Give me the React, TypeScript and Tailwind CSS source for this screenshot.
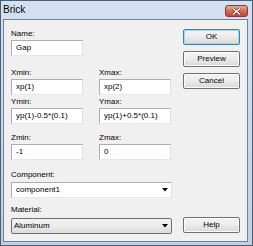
import React from "react";

function Field({ label, value, className = "" }: { label: string; value: string; className?: string }) {
  return (
    <div className={"flex flex-col " + className}>
      <span className="h-[10px] leading-[10px] text-[8px] text-black">{label}</span>
      <div className="mt-[1px] h-[16px] w-[72px] border border-[#abadb3] border-b-[#e3e9ef] border-r-[#dbdfe6] bg-white pl-[4px] text-[8px] leading-[14px] text-black">
        {value}
      </div>
    </div>
  );
}

function Button({ label, primary = false }: { label: string; primary?: boolean }) {
  return (
    <div
      className={
        "flex h-[16px] w-[57px] items-center justify-center rounded-[2px] border bg-gradient-to-b from-[#f4f4f4] via-[#ebebeb] to-[#d8d8d8] text-[8px] text-black " +
        (primary ? "border-[#3c7fb1] shadow-[inset_0_0_0_1px_#a8d8f0]" : "border-[#707070] shadow-[inset_0_0_0_1px_#fcfcfc]")
      }
    >
      {label}
    </div>
  );
}

function Arrow() {
  return (
    <svg width="6" height="4" viewBox="0 0 6 4" className="mr-[3px]">
      <path d="M0 0 H6 L3 3.5 Z" fill="#000" />
    </svg>
  );
}

export default function App() {
  return (
    <div
      className="flex h-[246px] w-[253px] flex-col border border-[#4e5d70] bg-gradient-to-b from-[#d3e1f2] to-[#bfd0e6]"
      style={{ fontFamily: '"Liberation Sans", Arial, sans-serif' }}
    >
      {/* Title bar */}
      <div className="relative h-[18px] shrink-0">
        <span className="absolute left-[2px] top-[3px] text-[10px] leading-[12px] text-black">Brick</span>
        <div className="absolute right-[4px] top-[4px] flex h-[12px] w-[23px] items-center justify-center rounded-[3px] border border-[#8a3a30] bg-gradient-to-b from-[#e9a99b] via-[#d16b57] to-[#c04a36]">
          <svg width="9" height="7" viewBox="0 0 9 7">
            <path d="M1 0.5 L8 6.5 M8 0.5 L1 6.5" stroke="#5a1a12" strokeWidth="2.6" />
            <path d="M1 0.5 L8 6.5 M8 0.5 L1 6.5" stroke="#fff" strokeWidth="1.5" />
          </svg>
        </div>
      </div>

      {/* Client area */}
      <div className="mb-[3px] ml-[2px] mr-[4px] flex flex-1 border border-[#6f8196] bg-[#f0f0f0] pl-[7px] pt-[9px]">
        <div className="flex w-[161px] flex-col">
          <Field label="Name:" value="Gap" />
          <div className="mt-[12px] flex gap-[16px]">
            <Field label="Xmin:" value="xp(1)" />
            <Field label="Xmax:" value="xp(2)" />
          </div>
          <div className="mt-[2px] flex gap-[16px]">
            <Field label="Ymin:" value="yp(1)-0.5*(0.1)" />
            <Field label="Ymax:" value="yp(1)+0.5*(0.1)" />
          </div>
          <div className="mt-[9px] flex gap-[16px]">
            <Field label="Zmin:" value="-1" />
            <Field label="Zmax:" value="0" />
          </div>
          <div className="mt-[10px] flex flex-col">
            <span className="h-[10px] leading-[10px] text-[8px] text-black">Component:</span>
            <div className="mt-[2px] flex h-[16px] w-[161px] items-center justify-between border border-[#abadb3] border-b-[#e3e9ef] border-r-[#dbdfe6] bg-white pl-[4px] text-[8px] text-black">
              <span>component1</span>
              <Arrow />
            </div>
          </div>
          <div className="mt-[7px] flex flex-col">
            <span className="h-[10px] leading-[10px] text-[8px] text-black">Material:</span>
            <div className="mt-[3px] flex h-[16px] w-[161px] items-center justify-between rounded-[2px] border border-[#707070] bg-gradient-to-b from-[#f2f2f2] via-[#ebebeb] to-[#dcdcdc] pl-[2px] text-[8px] text-black">
              <span>Aluminum</span>
              <Arrow />
            </div>
          </div>
        </div>

        <div className="ml-[11px] flex flex-col">
          <div className="mt-[0px]">
            <Button label="OK" primary />
          </div>
          <div className="mt-[6px]">
            <Button label="Preview" />
          </div>
          <div className="mt-[6px]">
            <Button label="Cancel" />
          </div>
          <div className="mt-auto mb-[8px]">
            <Button label="Help" />
          </div>
        </div>
      </div>
    </div>
  );
}
